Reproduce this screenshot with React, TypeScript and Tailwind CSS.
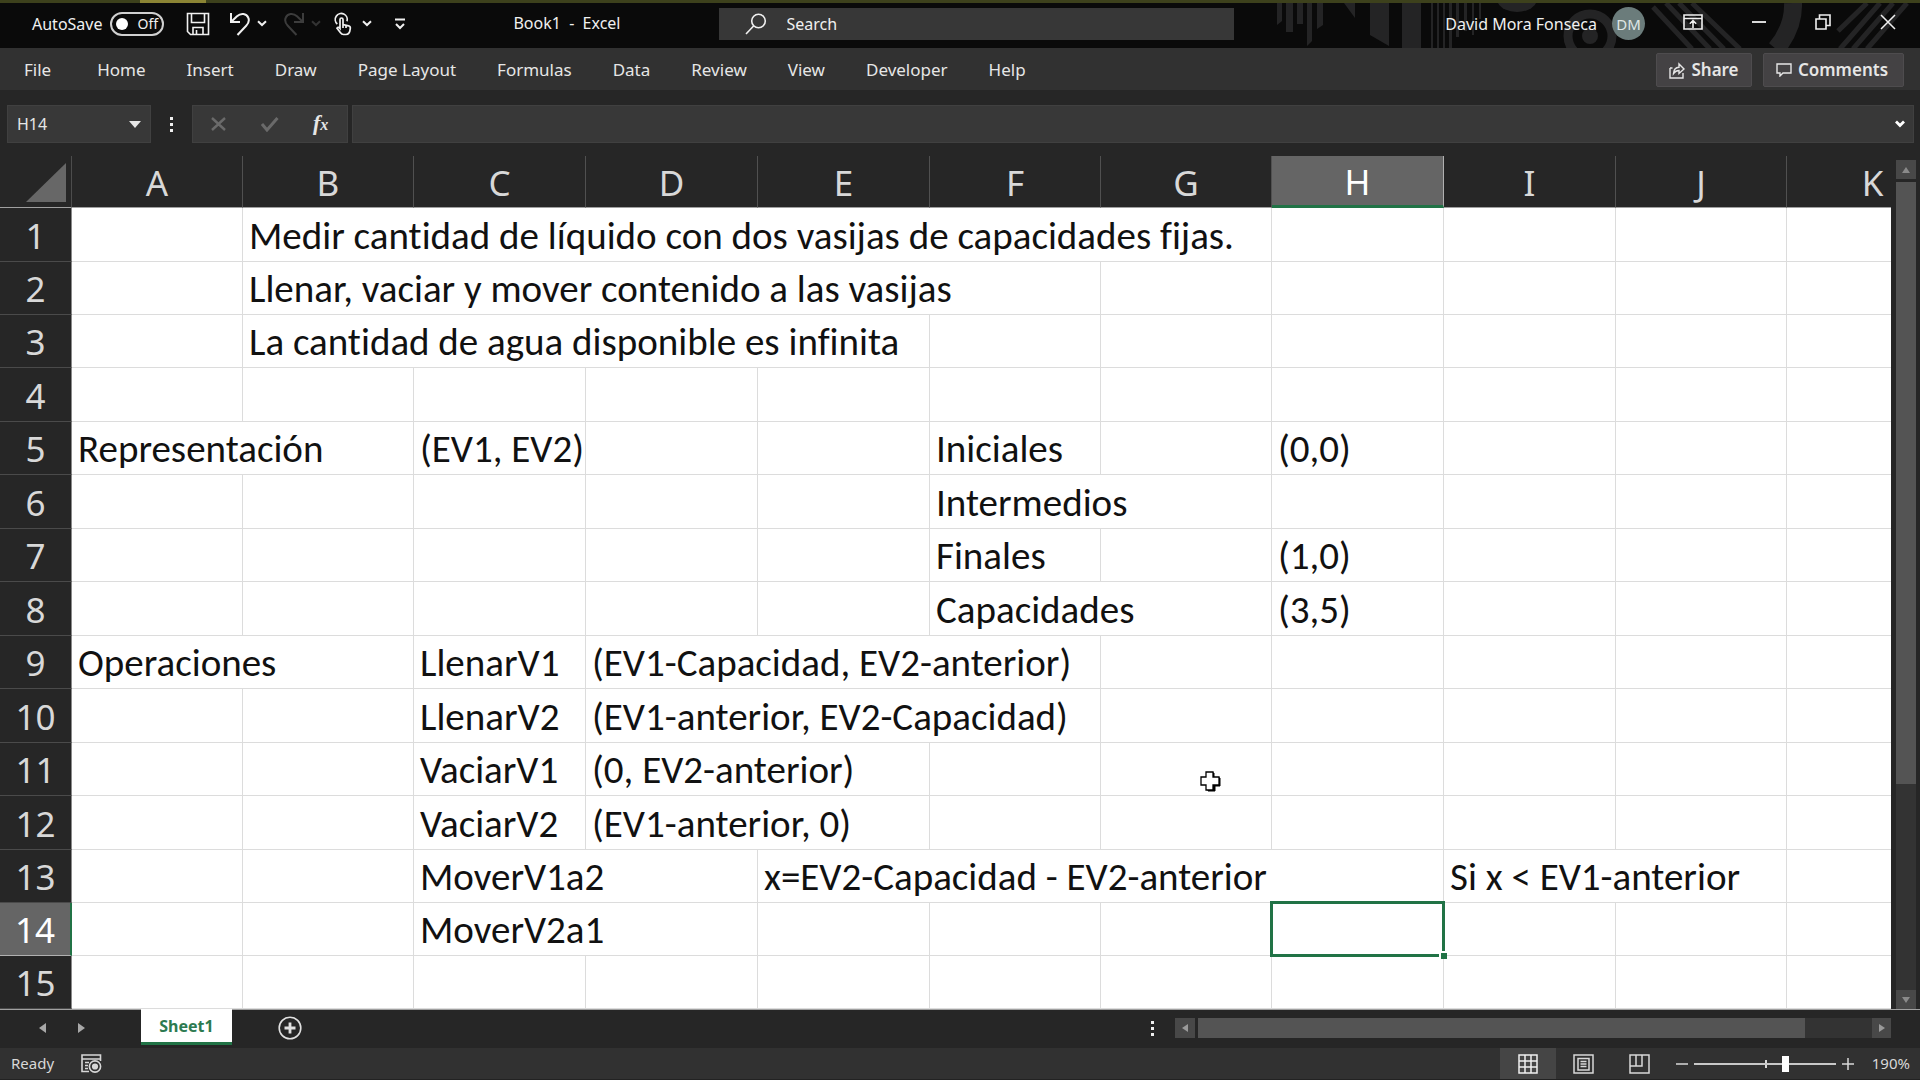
import type { ReactNode } from "react";

type Cell = { text?: string; span?: number; selected?: boolean; pointer?: boolean };
type Row = { height: string; cells: Cell[] };

const TALL = "h-[54px]";
const SHORT = "h-[53px]";
const blank = (count: number): Cell[] => Array.from({ length: count }, () => ({}));

const COLUMNS = [
  { name: "A", width: "w-[171px]" },
  { name: "B", width: "w-[171px]" },
  { name: "C", width: "w-[172px]" },
  { name: "D", width: "w-[172px]" },
  { name: "E", width: "w-[172px]" },
  { name: "F", width: "w-[171px]" },
  { name: "G", width: "w-[171px]" },
  { name: "H", width: "w-[172px]" },
  { name: "I", width: "w-[172px]" },
  { name: "J", width: "w-[171px]" },
  { name: "K", width: "w-[172px]" },
];

const ROWS: Row[] = [
  { height: TALL, cells: [{}, { text: "Medir cantidad de líquido con dos vasijas de capacidades fijas.", span: 6 }, ...blank(4)] },
  { height: SHORT, cells: [{}, { text: "Llenar, vaciar y mover contenido a las vasijas", span: 5 }, ...blank(5)] },
  { height: SHORT, cells: [{}, { text: "La cantidad de agua disponible es infinita", span: 4 }, ...blank(6)] },
  { height: TALL, cells: blank(11) },
  { height: SHORT, cells: [{ text: "Representación", span: 2 }, { text: "(EV1, EV2)" }, ...blank(2), { text: "Iniciales" }, {}, { text: "(0,0)" }, ...blank(3)] },
  { height: TALL, cells: [...blank(5), { text: "Intermedios", span: 2 }, ...blank(4)] },
  { height: SHORT, cells: [...blank(5), { text: "Finales" }, {}, { text: "(1,0)" }, ...blank(3)] },
  { height: TALL, cells: [...blank(5), { text: "Capacidades", span: 2 }, { text: "(3,5)" }, ...blank(3)] },
  { height: SHORT, cells: [{ text: "Operaciones", span: 2 }, { text: "LlenarV1" }, { text: "(EV1-Capacidad, EV2-anterior)", span: 3 }, ...blank(5)] },
  { height: TALL, cells: [...blank(2), { text: "LlenarV2" }, { text: "(EV1-anterior, EV2-Capacidad)", span: 3 }, ...blank(5)] },
  { height: SHORT, cells: [...blank(2), { text: "VaciarV1" }, { text: "(0, EV2-anterior)", span: 2 }, {}, { pointer: true }, ...blank(4)] },
  { height: TALL, cells: [...blank(2), { text: "VaciarV2" }, { text: "(EV1-anterior, 0)", span: 2 }, ...blank(6)] },
  { height: SHORT, cells: [...blank(2), { text: "MoverV1a2", span: 2 }, { text: "x=EV2-Capacidad - EV2-anterior", span: 4 }, { text: "Si x < EV1-anterior", span: 2 }, {}] },
  { height: SHORT, cells: [...blank(2), { text: "MoverV2a1", span: 2 }, ...blank(3), { selected: true }, ...blank(3)] },
  { height: SHORT, cells: blank(11) },
];

const TABS = ["Home", "Insert", "Draw", "Page Layout", "Formulas", "Data", "Review", "View", "Developer", "Help"];

function Chevron({ className = "" }: { className?: string }) {
  return (
    <svg viewBox="0 0 10 7" className={`h-[7px] w-[10px] ${className}`} fill="none" stroke="currentColor" strokeWidth="2">
      <path d="M1 1.2 5 5 9 1.2" />
    </svg>
  );
}

function IconButton({ label, className = "", children }: { label: string; className?: string; children: ReactNode }) {
  return (
    <button type="button" aria-label={label} className={`flex shrink-0 items-center justify-center ${className}`}>
      {children}
    </button>
  );
}

function TitlePattern() {
  return (
    <svg viewBox="0 0 660 45" className="absolute top-0 right-0 h-[45px] w-[660px]" fill="#242425" stroke="#242425" strokeWidth="0" aria-hidden="true">
      <path d="M17 0h5v18l-5 4zM26 0h7v29h-7zM37 0h6v21h-6zM47 0h5v38l-5 5zM57 0h6v22l-6 4zM84 0h11v15zM110 0h19v43l-19-11zM142 0h19v45h-19z" />
      <path d="M171 0h2v45h-2zM177 0h2v45h-2zM183 0h2v45h-2zM189 0h3v45h-3zM196 0h3v34h-3zM204 0h3v28h-3zM212 0h2v32h-2zM219 0h2v16h-2z" />
      <path d="M238 0a20 13 0 0 0 38 0z" />
      <circle cx="330" cy="33" r="22" fill="none" strokeWidth="9" />
      <circle cx="330" cy="33" r="8" />
      <path d="M393 4 432 46M406 0 450 46M419 0 464 46M432 0 480 46" fill="none" strokeWidth="5" />
      <path d="M533 0q1 24-17 46" fill="none" strokeWidth="18" />
      <path d="M607 0 578 28M620 0 580 46M633 0 593 46M647 0 607 46" fill="none" strokeWidth="5" />
    </svg>
  );
}

function TitleBar() {
  return (
    <header className="relative flex h-[45px] items-center bg-[#0a0a0a] pb-1 text-[16px] leading-5 text-[#f0f0f0]">
      <TitlePattern />
      <div className="relative flex min-w-0 flex-1 items-center pl-8">
        <label className="flex items-center gap-2">
          AutoSave
          <span className="relative flex h-6 w-[54px] items-center rounded-full border-2 border-[#d0d0d0]">
            <input type="checkbox" role="switch" aria-label="AutoSave" className="ml-1 size-3 appearance-none rounded-full bg-white" />
            <span className="ml-[9px] text-[14px]">Off</span>
          </span>
        </label>
        <IconButton label="Save" className="ml-[22px]">
          <svg viewBox="0 0 24 24" className="size-6" fill="none" stroke="currentColor" strokeWidth="1.6">
            <path d="M1.5 1.5h21v21h-18l-3-3zM5.5 1.5v9h13v-9M7 22.5v-7h10v7M10.5 18v4" />
          </svg>
        </IconButton>
        <IconButton label="Undo" className="ml-[19px]">
          <svg viewBox="0 0 22 24" className="h-6 w-[22px]" fill="none" stroke="currentColor" strokeWidth="2">
            <path d="M2 1v9h9M2.5 9.5 8 4.2c4-3.7 9.500-2.700 11.200 1.300 1.500 3.300.6 5.500-2 8.200L8.500 23" />
          </svg>
        </IconButton>
        <IconButton label="Undo history" className="ml-[6px]"><Chevron /></IconButton>
        <IconButton label="Redo" className="ml-[16px] text-[#3c3c3c]">
          <svg viewBox="0 0 22 24" className="h-6 w-[22px]" fill="none" stroke="currentColor" strokeWidth="2">
            <path d="M20 1v9h-9M19.500 9.500 14 4.200c-4-3.700-9.500-2.700-11.200 1.300-1.500 3.300-.6 5.500 2 8.200L13.500 23" />
          </svg>
        </IconButton>
        <IconButton label="Redo history" className="ml-[6px] text-[#333]"><Chevron /></IconButton>
        <IconButton label="Touch/Mouse Mode" className="ml-[13px]">
          <svg viewBox="0 0 18 24" className="h-6 w-[18px]" fill="none" stroke="currentColor" strokeWidth="1.7">
            <path d="M3.300 12A6 6 0 1 1 13 9.200" />
            <path d="M6 16.500V7.500c0-2 3-2 3 0v5l5.500 1.300c1.500.4 2 1.200 1.800 2.600-.3 3.200-.8 6.100-4.300 6.100H9.500c-1.500 0-2.400-.8-3.200-2L3 16.200c.8-1.400 2-.9 3 .3zM9 12.500V16M12 13.500V16" />
          </svg>
        </IconButton>
        <IconButton label="Touch options" className="ml-[10px]"><Chevron /></IconButton>
        <IconButton label="Customize Quick Access Toolbar" className="ml-[22px]">
          <svg viewBox="0 0 12 12" className="size-3" fill="none" stroke="currentColor" strokeWidth="2">
            <path d="M1 1.500h10M2 6l4 4 4-4" />
          </svg>
        </IconButton>
        <h1 className="ml-auto pr-[98px] pb-[2px] whitespace-pre">Book1  -  Excel</h1>
      </div>
      <label className="relative flex h-8 w-[515px] shrink items-center bg-[#373737] pl-[26px]">
        <svg viewBox="0 0 22 22" className="size-[22px] shrink-0" fill="none" stroke="currentColor" strokeWidth="1.600">
          <circle cx="13.500" cy="8" r="6.800" />
          <path d="M8.800 12.800 1 21" />
        </svg>
        <input type="text" aria-label="Search" placeholder="Search" className="ml-5 w-full bg-transparent outline-none placeholder:text-[#f0f0f0]" />
      </label>
      <div className="relative flex flex-1 items-center justify-end">
        <span className="whitespace-nowrap">David Mora Fonseca</span>
        <button type="button" aria-label="Account" className="ml-[15px] flex size-[33px] items-center justify-center rounded-full bg-[#6b7c7b] text-[15px] text-[#dfe6e6]">DM</button>
        <IconButton label="Ribbon Display Options" className="ml-[38px] pb-[3px]">
          <svg viewBox="0 0 20 16" className="h-4 w-5" fill="none" stroke="currentColor" strokeWidth="1.600">
            <path d="M1 1h18v14H1zM1 4.500h18M10 14V7M6.800 9.800 10 6.700l3.200 3.100" />
          </svg>
        </IconButton>
        <IconButton label="Minimize" className="ml-12 pb-[3px]">
          <svg viewBox="0 0 16 16" className="size-4" stroke="currentColor" strokeWidth="1.800"><path d="M1 8h14" /></svg>
        </IconButton>
        <IconButton label="Restore" className="ml-12 pb-[3px]">
          <svg viewBox="0 0 16 16" className="size-4" fill="none" stroke="currentColor" strokeWidth="1.600">
            <path d="M1 5h10v10H1zM4.500 5V1H15v10.500h-4" />
          </svg>
        </IconButton>
        <IconButton label="Close" className="mr-6 ml-[49px] pb-[3px]">
          <svg viewBox="0 0 16 16" className="size-4" stroke="currentColor" strokeWidth="1.500"><path d="m1 1 14 14M15 1 1 15" /></svg>
        </IconButton>
      </div>
    </header>
  );
}

function Ribbon() {
  return (
    <nav className="flex h-[42px] items-center bg-[#313131] pt-[2px] pr-4 pl-6 text-[17px] leading-6 text-[#e6e6e6]">
      <button type="button" className="mr-[46px]">File</button>
      <div className="flex gap-[41px]">
        {TABS.map((tab) => (
          <button key={tab} type="button" className="whitespace-nowrap">{tab}</button>
        ))}
      </div>
      <button type="button" className="ml-auto flex h-[34px] w-24 items-center justify-center gap-[6px] rounded-xs border border-[#4e4c4e] bg-[#444244] text-[17px] font-semibold">
        <svg viewBox="0 0 16 17" className="h-[17px] w-4" fill="none" stroke="currentColor" strokeWidth="1.400">
          <path d="M1 6v10h13v-5M1 6h2.500M4.500 11.500c.2-4 2-6 5.500-6.200V2l5 5-5 4.500V8.500c-2.500 0-4 .8-5.500 3z" />
        </svg>
        Share
      </button>
      <button type="button" className="ml-[11px] flex h-[34px] w-[141px] items-center justify-center gap-[6px] rounded-xs border border-[#4e4c4e] bg-[#444244] pr-[3px] text-[17px] font-semibold">
        <svg viewBox="0 0 16 14" className="h-[14px] w-4" fill="none" stroke="currentColor" strokeWidth="1.400">
          <path d="M1 1h14v9H7l-3 3v-3H1z" />
        </svg>
        Comments
      </button>
    </nav>
  );
}

function Dots() {
  return (
    <svg viewBox="0 0 3 15" className="h-[15px] w-[3px] shrink-0" fill="#f0f0f0" aria-hidden="true">
      <path d="M0 0h3v3H0zM0 6h3v3H0zM0 12h3v3H0z" />
    </svg>
  );
}

function FormulaBar() {
  return (
    <div className="flex items-center pt-[15px] pr-[6px] pb-[13px] pl-[7px] text-[#e6e6e6]">
      <div className="flex h-[38px] w-36 shrink-0 items-center border border-[#404040] bg-[#383838] pr-[9px] pl-[9px]">
        <input type="text" aria-label="Name Box" defaultValue="H14" className="w-full min-w-0 bg-transparent text-[16px] outline-none" />
        <IconButton label="Name list">
          <svg viewBox="0 0 12 7" className="h-[7px] w-3" fill="currentColor"><path d="M0 0h12L6 7z" /></svg>
        </IconButton>
      </div>
      <div className="ml-[19px]"><Dots /></div>
      <div className="ml-[19px] flex h-[38px] w-[156px] shrink-0 items-center border border-[#404040] bg-[#383838] pl-[18px]">
        <IconButton label="Cancel" className="text-[#6a6a6a]">
          <svg viewBox="0 0 16 16" className="size-4" stroke="currentColor" strokeWidth="2.400"><path d="m1 2 13 12M14 2 1 14" /></svg>
        </IconButton>
        <IconButton label="Enter" className="ml-[34px] text-[#6a6a6a]">
          <svg viewBox="0 0 18 16" className="h-4 w-[18px]" fill="none" stroke="currentColor" strokeWidth="3"><path d="m1 8 5 6L16.500 2" /></svg>
        </IconButton>
        <button type="button" aria-label="Insert Function" className="ml-[34px] font-['Liberation_Serif',serif] text-[22px] leading-6 font-bold italic">
          f<span className="text-[16px]">x</span>
        </button>
      </div>
      <div className="ml-1 flex h-[38px] flex-1 items-center border border-[#404040] bg-[#383838] pr-2">
        <input type="text" aria-label="Formula Bar" className="h-full w-full bg-transparent px-2 text-[16px] outline-none" />
        <IconButton label="Expand Formula Bar">
          <svg viewBox="0 0 10 8" className="h-2 w-[10px]" fill="none" stroke="#fff" strokeWidth="2.800"><path d="m1 1.500 4 4 4-4" /></svg>
        </IconButton>
      </div>
    </div>
  );
}

function Arrow({ turn = "" }: { turn?: string }) {
  return (
    <svg viewBox="0 0 8 8" className={`size-2 ${turn}`} fill="currentColor"><path d="M4 1 8 7H0z" /></svg>
  );
}

function SheetTable() {
  return (
    <table className="w-[1958px] table-fixed border-separate border-spacing-0">
      <thead>
        <tr className="h-[52px]">
          <th aria-label="Select all" className="w-[72px] border-r border-b border-r-[#4c4c4c] border-b-[#a0a0a0] p-0">
            <svg viewBox="0 0 71 51" className="block h-[51px] w-[71px]" fill="#676767"><path d="M66 7v39H26z" /></svg>
          </th>
          {COLUMNS.map(({ name, width }) => (
            <th
              key={name}
              scope="col"
              className={`${width} px-0 pt-[2px] pb-0 text-[35px] leading-[46px] font-normal ${
                name === "H"
                  ? "border-r border-b-3 border-r-[#b0b0b0] border-b-[#217346] bg-[#656565] text-white"
                  : "border-r border-b border-r-[#505050] border-b-[#a0a0a0] text-[#d8d8d8]"
              }`}
            >
              {name}
            </th>
          ))}
        </tr>
      </thead>
      <tbody>
        {ROWS.map(({ height, cells }, index) => (
          <tr key={index} className={height}>
            <th
              scope="row"
              className={`px-0 pt-[2px] pb-0 text-[35px] leading-[46px] font-normal ${
                index === 13
                  ? "border-r-2 border-b border-r-[#217346] border-b-[#b0b0b0] bg-[#656565] text-white"
                  : "border-r border-b border-r-[#8a8a8a] border-b-[#4a4a4a] text-[#d8d8d8]"
              }`}
            >
              {index + 1}
            </th>
            {cells.map(({ text, span, selected, pointer }, cell) => (
              <td
                key={cell}
                colSpan={span}
                className="relative border-r border-b border-[#dcdcdc] bg-white pt-[2px] pr-0 pb-0 pl-[6px] font-[Carlito,Calibri,'Noto_Sans',sans-serif] text-[39px] leading-[46px] whitespace-nowrap text-[#111] [font-variant-ligatures:none]"
              >
                {text}
                {selected && (
                  <span className="absolute -inset-[2px] z-10 border-3 border-[#217346]">
                    <span className="absolute -right-[5px] -bottom-[5px] size-2 border-t-2 border-l-2 border-white bg-[#217346]" />
                  </span>
                )}
                {pointer && (
                  <svg viewBox="0 0 21 21" className="absolute top-7 left-[99px] size-[21px]" aria-hidden="true">
                    <path d="M8 2h6v5h6v8h-5v5H8v-5z" fill="#000" stroke="#000" strokeWidth="1" />
                    <path d="M6 1h7v5h6v8h-6v5H6v-5H1V6h5z" fill="#fff" stroke="#000" strokeWidth="1.300" />
                  </svg>
                )}
              </td>
            ))}
          </tr>
        ))}
      </tbody>
    </table>
  );
}

function VerticalScrollbar() {
  return (
    <div className="mr-1 ml-[5px] flex w-5 shrink-0 flex-col pt-1 text-[#8a8a8a]">
      <IconButton label="Scroll up" className="h-[19px] bg-[#484848]"><Arrow /></IconButton>
      <div className="mt-[3px] flex flex-1 flex-col bg-[#333]">
        <div className="h-[74.500%] bg-[#545454]" />
      </div>
      <IconButton label="Scroll down" className="h-[19px] bg-[#484848]"><Arrow turn="rotate-180" /></IconButton>
    </div>
  );
}

function SheetTabs() {
  return (
    <div className="flex h-[39px] items-start border-t border-[#a0a0a0]">
      <div className="flex h-9 items-center pl-[39px] text-[#a8a8a8]">
        <IconButton label="Previous sheets"><svg viewBox="0 0 7 10" className="h-[10px] w-[7px]" fill="currentColor"><path d="M7 0v10L0 5z" /></svg></IconButton>
        <IconButton label="Next sheets" className="ml-8"><svg viewBox="0 0 7 10" className="h-[10px] w-[7px]" fill="currentColor"><path d="M0 0v10l7-5z" /></svg></IconButton>
      </div>
      <button type="button" className="-mt-px ml-14 h-9 w-[91px] border-b-3 border-[#217346] bg-white text-[16px] leading-8 font-bold text-[#2c7a50]">Sheet1</button>
      <IconButton label="New sheet" className="mt-[6px] ml-[46px]">
        <svg viewBox="0 0 24 24" className="size-6" fill="none" stroke="#e0e0e0" strokeWidth="1.600">
          <circle cx="12" cy="12" r="10.800" />
          <path d="M12 6.500v11M6.500 12h11" strokeWidth="2.800" />
        </svg>
      </IconButton>
      <div className="mt-2 mr-[29px] ml-auto flex w-[740px] items-center">
        <Dots />
        <div className="ml-[21px] flex h-5 flex-1 text-[#9a9a9a]">
          <IconButton label="Scroll left" className="w-5 bg-[#484848]"><Arrow turn="-rotate-90" /></IconButton>
          <div className="ml-[3px] flex flex-1 bg-[#333]"><div className="w-[90%] bg-[#545454]" /></div>
          <IconButton label="Scroll right" className="w-[19px] bg-[#484848]"><Arrow turn="rotate-90" /></IconButton>
        </div>
      </div>
    </div>
  );
}

function StatusBar() {
  return (
    <footer className="flex h-[33px] items-center border-b-2 border-[#222] bg-[#313131] pr-[10px] pl-[11px] text-[15px] text-[#d8d8d8]">
      <span>Ready</span>
      <IconButton label="Record Macro" className="ml-[27px]">
        <svg viewBox="0 0 21 19" className="h-[19px] w-[21px]" fill="none" stroke="currentColor" strokeWidth="1.600">
          <path d="M8 17.500H1V1h18.500v6M1 5h18.500M4 8.500h4M4 11.500h3M4 14.500h3" />
          <circle cx="14" cy="12.500" r="5.600" />
          <circle cx="14" cy="12.500" r="2.300" fill="currentColor" />
        </svg>
      </IconButton>
      <div className="ml-auto flex h-full items-center">
        <IconButton label="Normal view" className="h-full w-14 bg-[#454545]">
          <svg viewBox="0 0 20 20" className="size-5" fill="none" stroke="#f0f0f0" strokeWidth="1.500"><path d="M1 1h18v18H1zM7 1v18M13 1v18M1 7h18M1 13h18" /></svg>
        </IconButton>
        <IconButton label="Page Layout view" className="h-full w-14">
          <svg viewBox="0 0 21 20" className="h-5 w-[21px]" fill="none" stroke="currentColor" strokeWidth="1.500"><path d="M1 1h19v18H1zM5 4.500h11v11.500H5zM7.500 7.500h6M7.500 10h6M7.500 12.500h6" /></svg>
        </IconButton>
        <IconButton label="Page Break Preview" className="h-full w-14">
          <svg viewBox="0 0 21 20" className="h-5 w-[21px]" fill="none" stroke="currentColor" strokeWidth="1.500"><path d="M1 1h19v18H1zM1 12h12V1M7 1v11" /></svg>
        </IconButton>
        <IconButton label="Zoom out" className="ml-2">
          <svg viewBox="0 0 12 12" className="size-3" stroke="currentColor" strokeWidth="1.500"><path d="M0 6h12" /></svg>
        </IconButton>
        <div className="relative ml-[6px] flex w-[142px] items-center">
          <span className="absolute top-1/2 left-1/2 h-2 w-[2px] -translate-y-1/2 bg-[#d8d8d8]" />
          <input
            type="range"
            aria-label="Zoom"
            min={0}
            max={100}
            defaultValue={65}
            className="relative h-4 w-full appearance-none bg-transparent [&::-webkit-slider-runnable-track]:h-[2px] [&::-webkit-slider-runnable-track]:bg-[#c8c8c8] [&::-webkit-slider-thumb]:-mt-[7px] [&::-webkit-slider-thumb]:h-4 [&::-webkit-slider-thumb]:w-[7px] [&::-webkit-slider-thumb]:appearance-none [&::-webkit-slider-thumb]:bg-white"
          />
        </div>
        <IconButton label="Zoom in" className="ml-[6px]">
          <svg viewBox="0 0 12 12" className="size-3" stroke="currentColor" strokeWidth="1.500"><path d="M0 6h12M6 0v12" /></svg>
        </IconButton>
        <button type="button" className="ml-[18px]">190%</button>
      </div>
    </footer>
  );
}

export default function App() {
  return (
    <div className="flex min-h-screen flex-col overflow-hidden bg-[#262626] font-['Noto_Sans','Open_Sans',sans-serif]">
      <div className="flex h-[3px] bg-[#3d411c]">
        <div className="ml-[140px] w-[66px] bg-[#8b8434]" />
      </div>
      <TitleBar />
      <Ribbon />
      <FormulaBar />
      <main className="flex">
        <div className="min-w-0 flex-1 overflow-hidden"><SheetTable /></div>
        <VerticalScrollbar />
      </main>
      <SheetTabs />
      <StatusBar />
    </div>
  );
}
